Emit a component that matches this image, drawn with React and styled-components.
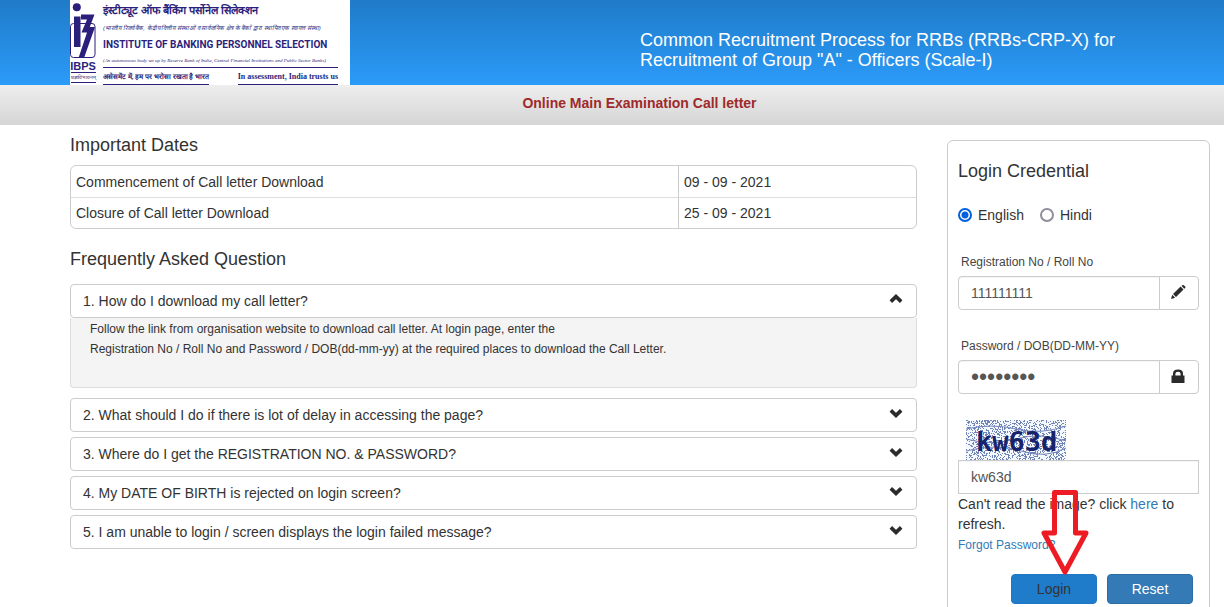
import React, { useState } from 'react'
import styled, { createGlobalStyle } from 'styled-components'

const faqs = [
  {
    title: '1. How do I download my call letter?',
    body: [
      'Follow the link from organisation website to download call letter. At login page, enter the',
      'Registration No / Roll No and Password / DOB(dd-mm-yy) at the required places to download the Call Letter.',
    ],
  },
  { title: '2. What should I do if there is lot of delay in accessing the page?' },
  { title: '3. Where do I get the REGISTRATION NO. & PASSWORD?' },
  { title: '4. My DATE OF BIRTH is rejected on login screen?' },
  { title: '5. I am unable to login / screen displays the login failed message?' },
]

// speckles behind the captcha text, always the same for one seed
const makeSpeckles = () => {
  let seed = 63
  let d = ''
  for (let y = 0; y < 40; y++) {
    for (let x = 0; x < 100; x++) {
      seed = (seed * 16807) % 2147483647
      if (seed / 2147483647 < 0.32) d += `M${x} ${y}h1v1h-1z`
    }
  }
  return d
}
const speckles = makeSpeckles()

const Chevron = ({ up }) => (
  <svg width="14" height="10" viewBox="0 0 14 10" aria-hidden="true">
    <path d={up ? 'M1.800 7.600 7 2.600l5.200 5' : 'M1.800 2.400 7 7.400l5.200-5'} fill="none" stroke="#2b2b2b" strokeWidth="3.6" />
  </svg>
)

const Pencil = () => (
  <svg width="16" height="16" viewBox="0 0 16 16" aria-hidden="true">
    <path d="M0 14l1.200-4.200 3 3zM2 9l7.600-7.400 2.900 2.900L5 12zM10.400 .8l1-.6q.7-.4 1.400 0l1.400 1.400q.6.7 0 1.400l-1 .8z" fill="#2b2b2b" />
  </svg>
)

const Lock = () => (
  <svg width="16" height="16" viewBox="0 0 16 16" aria-hidden="true">
    <path d="M.5 6.500H2V4.500Q2 .5 7 .5t5 4v2h1.500V14H.5zM4.400 6.500h5.200V4.700Q9.600 2.700 7 2.700T4.400 4.700z" fill="#2b2b2b" />
  </svg>
)

const Emblem = () => (
  <svg width="26" height="60" viewBox="0 0 26 60" aria-hidden="true">
    <rect x="0.500" y="23.500" width="24.500" height="34" rx="3" fill="none" stroke="#2b1f7c" />
    <circle cx="6.800" cy="7.200" r="4" fill="#2b1f7c" />
    <path d="M4 16.500h6.500V47H4z" fill="#2b1f7c" />
    <path d="M11 14.500h13.500L19.800 27H25L14 58H8.500l8.500-25.500h-5.500L17 19.500h-6z" fill="#2b1f7c" />
  </svg>
)

const App = () => {
  const [open, setOpen] = useState(0)
  const [lang, setLang] = useState('en')

  return (
    <>
      <GlobalStyle />
      <Header>
        <Logo>
          <Mark>
            <Emblem />
            <MarkName>IBPS</MarkName>
            <MarkMotto>प्रज्ञाविभावनम्</MarkMotto>
          </Mark>
          <LogoText>
            <HindiName>इंस्टीट्यूट ऑफ बैंकिंग पर्सोनेल सिलेक्शन</HindiName>
            <HindiNote>(भारतीय रिजर्व बैंक, केंद्रीय वित्तीय संस्थाओं व सार्वजनिक क्षेत्र के बैंकों द्वारा स्थापित एक स्वायत्त संस्था)</HindiNote>
            <EnglishName>INSTITUTE OF BANKING PERSONNEL SELECTION</EnglishName>
            <EnglishNote>(An autonomous body set up by Reserve Bank of India, Central Financial Institutions and Public Sector Banks)</EnglishNote>
            <Taglines>
              <Tagline>असेसमेंट में, हम पर भरोसा रखता है भारत</Tagline>
              <Tagline $large>In assessment, India trusts us</Tagline>
            </Taglines>
          </LogoText>
        </Logo>
        <HeaderTitle>
          Common Recruitment Process for RRBs (RRBs-CRP-X) for Recruitment of Group "A" - Officers (Scale-I)
        </HeaderTitle>
      </Header>
      <SubHeader>Online Main Examination Call letter</SubHeader>

      <Content>
        <main>
          <Heading>Important Dates</Heading>
          <Dates>
            <tbody>
              <tr>
                <td>Commencement of Call letter Download</td>
                <td>09 - 09 - 2021</td>
              </tr>
              <tr>
                <td>Closure of Call letter Download</td>
                <td>25 - 09 - 2021</td>
              </tr>
            </tbody>
          </Dates>
          <Heading>Frequently Asked Question</Heading>
          <FaqList>
            {faqs.map((faq, i) => (
              <div key={faq.title}>
                <Question type="button" aria-expanded={open === i} onClick={() => setOpen(open === i ? -1 : i)}>
                  {faq.title}
                  <Chevron up={open === i} />
                </Question>
                {open === i && faq.body && (
                  <Answer>
                    {faq.body.map((line) => <p key={line}>{line}</p>)}
                  </Answer>
                )}
              </div>
            ))}
          </FaqList>
        </main>

        <Card onSubmit={(e) => e.preventDefault()}>
          <CardTitle>Login Credential</CardTitle>
          <Languages>
            <label>
              <Radio name="lang" checked={lang === 'en'} onChange={() => setLang('en')} />
              English
            </label>
            <label>
              <Radio name="lang" checked={lang === 'hi'} onChange={() => setLang('hi')} />
              Hindi
            </label>
          </Languages>
          <Label htmlFor="regno">Registration No / Roll No</Label>
          <InputGroup>
            <Input id="regno" type="text" defaultValue="111111111" />
            <Addon><Pencil /></Addon>
          </InputGroup>
          <Label htmlFor="password">Password / DOB(DD-MM-YY)</Label>
          <InputGroup>
            <Input id="password" type="password" defaultValue="01011990" />
            <Addon><Lock /></Addon>
          </InputGroup>
          <Captcha width="100" height="40" viewBox="0 0 100 40">
            <rect width="100" height="40" fill="#f4f8ff" />
            <path d={speckles} fill="#7184b8" />
            <path d="M0 9q25-6 50 0t50-3M0 19q25 7 50 0t50 2M0 31q30-8 55 0t45-3" fill="none" stroke="#7484b8" />
            <text x="10" y="31">kw63d</text>
          </Captcha>
          <CaptchaInput type="text" aria-label="Captcha" defaultValue="kw63d" />
          <Hint>Can't read the image? click <a href="#refresh">here</a> to refresh.</Hint>
          <Forgot href="#forgot">Forgot Password?</Forgot>
          <Buttons>
            <Button $login type="submit">Login</Button>
            <Button type="reset">Reset</Button>
          </Buttons>
          <Arrow width="50" height="88" viewBox="0 0 50 88" aria-hidden="true">
            <path d="M14.500 3.500h21v40.500h10.500L25 83 4 44h10.500z" fill="none" stroke="#ed1c24" strokeWidth="5" strokeLinejoin="round" />
          </Arrow>
        </Card>
      </Content>
    </>
  )
}

const GlobalStyle = createGlobalStyle`
  * {
    box-sizing: border-box;
  }
  body {
    margin: 0;
    background-color: #fff;
    color: #333;
    font-family: "Liberation Sans", Arial, sans-serif;
    font-size: 14px;
    line-height: 20px;
  }
  a {
    color: #337ab7;
    text-decoration: none;
  }
  p {
    margin: 0;
  }
  input, button {
    font-family: inherit;
    font-size: 14px;
  }
`

const Header = styled.header`
  display: flex;
  justify-content: space-between;
  height: 85px;
  padding: 0 70px;
  background: linear-gradient(#1f7bc8, #2b9bf9);
`

const Logo = styled.div`
  display: flex;
  gap: 7px;
  width: 280px;
  background-color: #fff;
  color: #2b1f7c;
  white-space: nowrap;
`

const Mark = styled.div`
  display: flex;
  flex-direction: column;
  align-items: center;
  width: 26px;
`

const MarkName = styled.strong`
  font-size: 11px;
  line-height: 12px;
`

const MarkMotto = styled.span`
  border-top: 1px solid #2b1f7c;
  border-bottom: 1px solid #2b1f7c;
  font-size: 5px;
  line-height: 9px;
`

const LogoText = styled.div`
  display: flex;
  flex-direction: column;
  width: 235px;
`

const HindiName = styled.div`
  font-size: 11px;
  font-weight: bold;
  line-height: 20px;
`

const HindiNote = styled.div`
  font-size: 6px;
  font-style: italic;
  line-height: 16px;
`

const EnglishName = styled.div`
  font-family: Roboto, "Liberation Sans", Arial, sans-serif;
  font-size: 10px;
  font-weight: bold;
  line-height: 18px;
`

const EnglishNote = styled.div`
  border-bottom: 1px solid #2b1f7c;
  font-family: "Liberation Serif", serif;
  font-size: 5px;
  font-style: italic;
  line-height: 13px;
`

const Taglines = styled.div`
  display: flex;
  justify-content: space-between;
  padding-top: 2px;
`

const Tagline = styled.div`
  border-bottom: 1px solid #2b1f7c;
  font-family: "Liberation Serif", serif;
  font-size: ${(props) => (props.$large ? '8px' : '7px')};
  font-weight: bold;
  line-height: 14px;
`

const HeaderTitle = styled.h1`
  width: 514px;
  margin: 30px 0 0;
  color: #fff;
  font-size: 18px;
  font-weight: normal;
  line-height: 20px;
`

const SubHeader = styled.div`
  height: 40px;
  padding: 8px 0 8px 55px;
  background: linear-gradient(#eee, #d5d5d5);
  color: #9e2a2b;
  font-weight: bold;
  text-align: center;
`

const Content = styled.div`
  display: grid;
  grid-template-columns: minmax(0, 1fr) 263px;
  align-items: start;
  gap: 30px;
  padding: 0 14px 0 70px;
`

const Heading = styled.h2`
  margin: 10px 0;
  font-size: 18px;
  font-weight: normal;
  line-height: 20px;
`

const Dates = styled.table`
  width: 100%;
  margin-bottom: 20px;
  border: 1px solid #ccc;
  border-radius: 6px;
  border-spacing: 0;
  td {
    height: 31px;
    padding: 5px;
  }
  td + td {
    width: 238px;
    border-left: 1px solid #ccc;
  }
  tr + tr td {
    border-top: 1px solid #ddd;
  }
`

const FaqList = styled.div`
  display: flex;
  flex-direction: column;
  gap: 5px;
  padding-top: 5px;
`

const Question = styled.button`
  display: flex;
  justify-content: space-between;
  align-items: center;
  width: 100%;
  height: 34px;
  padding: 0 13px 0 12px;
  background-color: #fff;
  color: #333;
  border: 1px solid #ccc;
  border-radius: 4px;
  text-align: left;
  cursor: pointer;
  svg {
    margin-bottom: 4px;
  }
`

const Answer = styled.div`
  min-height: 70px;
  margin-bottom: 5px;
  padding: 1px 19px;
  background-color: #f4f4f4;
  border: 1px solid #ddd;
  border-top: none;
  border-radius: 0 0 4px 4px;
  font-size: 12px;
`

const Card = styled.form`
  position: relative;
  display: flex;
  flex-direction: column;
  margin-top: 15px;
  padding: 20px 10px;
  border: 1px solid #ccc;
  border-radius: 6px;
`

const CardTitle = styled.h2`
  margin: 0 0 24px;
  font-size: 18px;
  font-weight: normal;
  line-height: 20px;
`

const Languages = styled.div`
  display: flex;
  gap: 16px;
  margin-bottom: 27px;
  label {
    display: flex;
    align-items: center;
    gap: 6px;
  }
`

const Radio = styled.input.attrs({ type: 'radio' })`
  appearance: none;
  width: 14px;
  height: 14px;
  margin: 0;
  border: 2px solid #8f8f9d;
  border-radius: 50%;
  &:checked {
    border-color: #0061e0;
    background: radial-gradient(circle, #0061e0 3px, #fff 4px);
  }
`

const Label = styled.label`
  padding-left: 3px;
  margin-bottom: 4px;
  color: #444;
  font-size: 12px;
`

const InputGroup = styled.div`
  display: flex;
  height: 34px;
  margin-bottom: 26px;
  border: 1px solid #ccc;
  border-radius: 4px;
`

const Input = styled.input`
  flex: 1;
  min-width: 0;
  padding: 0 12px;
  background: none;
  color: #555;
  border: none;
  outline: none;
  box-shadow: inset 0 1px 1px rgba(0, 0, 0, 0.04);
  &[type='password'] {
    font-size: 23px;
  }
`

const Addon = styled.span`
  display: flex;
  justify-content: center;
  align-items: center;
  width: 39px;
  border-left: 1px solid #ccc;
`

const Captcha = styled.svg`
  margin-left: 8px;
  text {
    fill: #17246b;
    font-family: "DejaVu Sans Mono", monospace;
    font-size: 27px;
    font-weight: bold;
  }
`

const CaptchaInput = styled.input`
  height: 34px;
  padding: 0 12px;
  color: #555;
  border: 1px solid #ccc;
  outline: none;
  box-shadow: inset 0 1px 1px rgba(0, 0, 0, 0.04);
`

const Hint = styled.p`
  line-height: 20px;
`

const Forgot = styled.a`
  padding-top: 1px;
  font-size: 12px;
`

const Buttons = styled.div`
  display: flex;
  justify-content: flex-end;
  gap: 10px;
  padding: 19px 6px 0 0;
`

const Button = styled.button`
  width: 86px;
  height: 30px;
  background-color: ${(props) => (props.$login ? '#1f7ccb' : '#337ab7')};
  color: ${(props) => (props.$login ? '#333' : '#fff')};
  border: 1px solid ${(props) => (props.$login ? '#1f78c4' : '#2e6da4')};
  border-radius: 4px;
  cursor: pointer;
`

const Arrow = styled.svg`
  position: absolute;
  top: 348px;
  left: 92px;
  pointer-events: none;
`

export default App
